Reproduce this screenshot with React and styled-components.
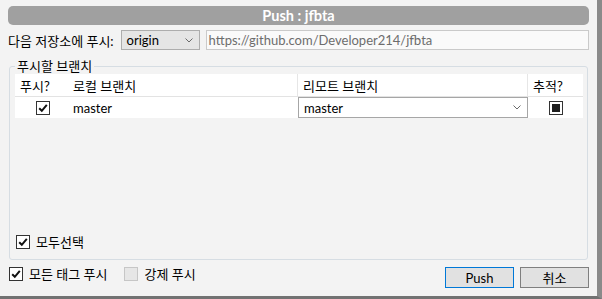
import styled, { createGlobalStyle } from 'styled-components';

const GlobalStyle = createGlobalStyle`
  html, body {
    margin: 0;
    padding: 0;
    background: #f3f3f3;
  }
  body {
    font-family: "Lato", "Noto Sans CJK KR", sans-serif;
    font-size: 13px;
    color: #000;
  }
`;

const Window = styled.div`
  width: 602px;
  height: 299px;
  box-sizing: border-box;
  background: #f3f3f3;
  border-right: 5px solid #8a8a8a;
  border-bottom: 3px solid #727272;
  padding: 6px 8px 0 8px;
  display: flex;
  flex-direction: column;
`;

const TitleBar = styled.div`
  height: 19px;
  line-height: 19px;
  border-radius: 5px;
  background: #a0a0a0;
  color: #fff;
  font-weight: bold;
  font-size: 14.5px;
  text-align: center;
`;

const RepoRow = styled.div`
  margin-top: 5px;
  height: 20px;
  display: flex;
  align-items: center;
`;

const Label = styled.span`
  margin-right: 7px;
  white-space: nowrap;
`;

const Combo = styled.div`
  box-sizing: border-box;
  width: ${p => p.$width || 'auto'};
  height: ${p => p.$height || 20}px;
  border: 1px solid ${p => p.$flat ? '#a6a6a6' : '#adadad'};
  background: ${p => p.$flat ? '#fff' : '#e5e5e5'};
  padding: 0 6px 0 5px;
  display: flex;
  align-items: center;
  justify-content: space-between;
`;

const UrlInput = styled.div`
  box-sizing: border-box;
  flex: 1;
  margin-left: 6px;
  height: 20px;
  border: 1px solid #cacaca;
  background: #fafafa;
  color: #6d6d6d;
  padding-left: 2px;
  display: flex;
  align-items: center;
`;

const Group = styled.fieldset`
  margin: 8px 1px 0 1px;
  padding: 0 4px 10px 5px;
  border: 1px solid #d6dde3;
  border-radius: 3px;
  min-width: 0;
`;

const Legend = styled.legend`
  padding: 0 2px;
  line-height: 16px;
`;

const TableArea = styled.div`
  height: 156px;
`;

const Grid = styled.div`
  display: grid;
  grid-template-columns: 53px 230px 230px 55px;
`;

const HeadCell = styled.div`
  height: 23px;
  box-sizing: border-box;
  background: #fff;
  border-bottom: 1px solid #e3e3e3;
  border-right: ${p => p.$divider ? '1px solid #e6e6e6' : 'none'};
  padding-left: 5px;
  display: flex;
  align-items: center;
`;

const Cell = styled.div`
  height: 21px;
  background: #fff;
  display: flex;
  align-items: center;
  justify-content: ${p => p.$center ? 'center' : 'flex-start'};
  padding-left: ${p => p.$pad || 0}px;
`;

const Box = styled.span`
  box-sizing: border-box;
  width: 14px;
  height: 14px;
  flex: none;
  border: 1px solid ${p => p.$disabled ? '#c6c6c6' : '#333'};
  background: ${p => p.$disabled ? '#e6e6e6' : '#fff'};
  display: inline-flex;
  align-items: center;
  justify-content: center;
`;

const Square = styled.span`
  width: 8px;
  height: 8px;
  background: #1e1e1e;
`;

const CheckRow = styled.label`
  display: flex;
  align-items: center;
  gap: 6px;
  margin-left: 1px;
  margin-top: ${p => p.$top || 0}px;
  line-height: 14px;
`;

const BottomBar = styled.div`
  margin-top: 7px;
  display: flex;
  align-items: flex-start;
`;

const Options = styled.div`
  display: flex;
  gap: 16px;
`;

const Buttons = styled.div`
  margin-left: auto;
  display: flex;
  gap: 6px;
`;

const Button = styled.button`
  box-sizing: border-box;
  width: 69px;
  height: 21px;
  padding: 0;
  font: inherit;
  color: #000;
  background: #e1e1e1;
  border: 1px solid ${p => p.$primary ? '#0078d7' : '#7f7f7f'};
`;

const Chevron = () => (
  <svg width="8" height="5" viewBox="0 0 8 5">
    <path d="M0.5 0.5 L4 4 L7.5 0.5" fill="none" stroke="#6a6a6a" strokeWidth="1" />
  </svg>
);

const Check = ({ checked, disabled }) => (
  <Box $disabled={disabled}>
    {checked && (
      <svg width="10" height="10" viewBox="0 0 10 10">
        <path d="M1.2 5.2 L3.8 7.8 L8.8 1.8" fill="none" stroke="#111" strokeWidth="2" />
      </svg>
    )}
  </Box>
);

export default function App() {
  return (
    <>
      <GlobalStyle />
      <Window>
        <TitleBar>Push : jfbta</TitleBar>
        <RepoRow>
          <Label>다음 저장소에 푸시:</Label>
          <Combo $width="79px">
            origin
            <Chevron />
          </Combo>
          <UrlInput>https://github.com/Developer214/jfbta</UrlInput>
        </RepoRow>
        <Group>
          <Legend>푸시할 브랜치</Legend>
          <TableArea>
            <Grid>
              <HeadCell>푸시?</HeadCell>
              <HeadCell $divider>로컬 브랜치</HeadCell>
              <HeadCell $divider>리모트 브랜치</HeadCell>
              <HeadCell>추적?</HeadCell>
              <Cell $pad={21}><Check checked /></Cell>
              <Cell $pad={5}>master</Cell>
              <Combo $flat $height={21}>
                master
                <Chevron />
              </Combo>
              <Cell $center>
                <Box><Square /></Box>
              </Cell>
            </Grid>
          </TableArea>
          <CheckRow $top={5}>
            <Check checked />
            모두선택
          </CheckRow>
        </Group>
        <BottomBar>
          <Options>
            <CheckRow>
              <Check checked />
              모든 태그 푸시
            </CheckRow>
            <CheckRow>
              <Check disabled />
              강제 푸시
            </CheckRow>
          </Options>
          <Buttons>
            <Button $primary>Push</Button>
            <Button>취소</Button>
          </Buttons>
        </BottomBar>
      </Window>
    </>
  );
}
